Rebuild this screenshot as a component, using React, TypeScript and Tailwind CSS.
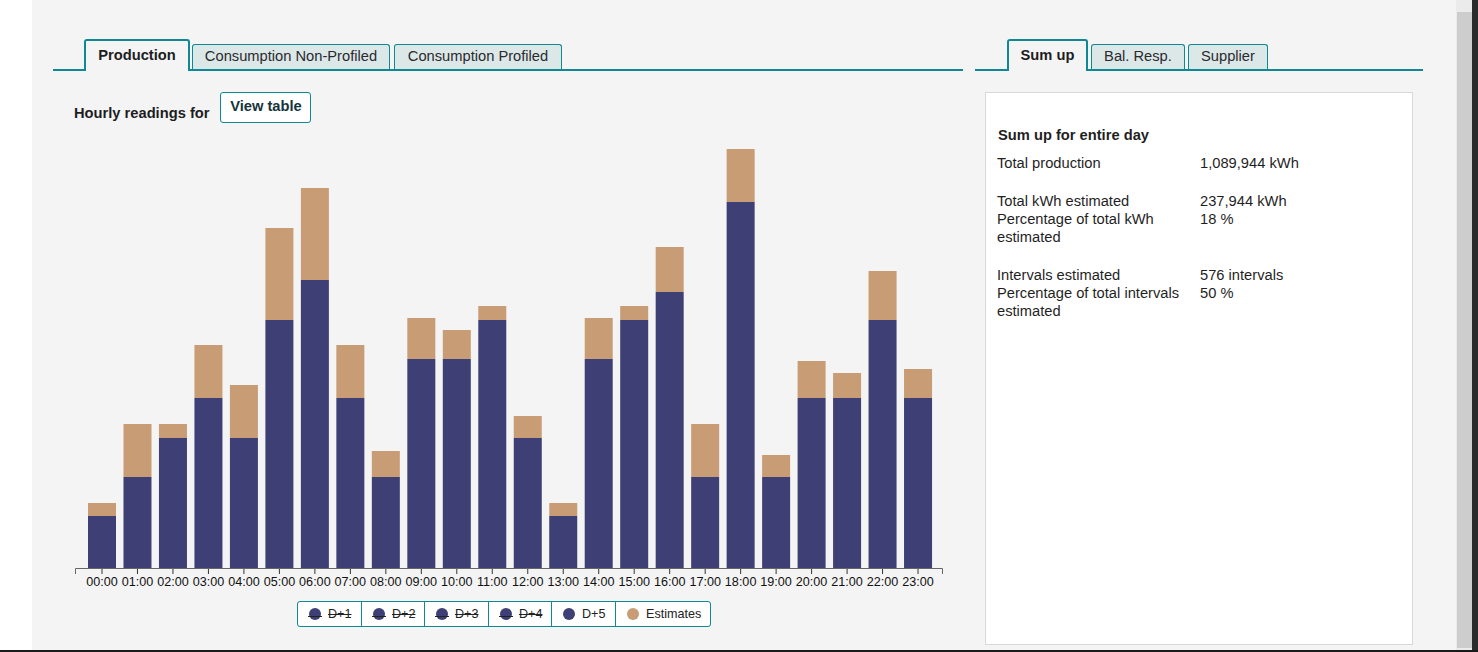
import React from 'react'

// [navyTop, tanTop] in page px, base line at 568
const bars: [number, number][] = [
  [516, 503], [477, 424], [438, 424], [398, 345], [438, 385], [320, 228],
  [280, 188], [398, 345], [477, 451], [359, 318], [359, 330], [320, 306],
  [438, 416], [516, 503], [359, 318], [320, 306], [292, 247], [477, 424],
  [202, 149], [477, 455], [398, 361], [398, 373], [320, 271], [398, 369],
]

type Tab = {label: string; active?: boolean; w: string; ml: string}

function TabBar({tabs, lead}: {tabs: Tab[]; lead: string}) {
  return (
    <div className={`flex items-end border-b-2 border-[#0e8893] h-[32px] ${lead}`}>
      {tabs.map((t) =>
        t.active ? (
          <div
            key={t.label}
            className={`${t.w} ${t.ml} -mb-[2px] h-[32px] pb-[2px] border-2 border-b-0 border-[#0e8893] bg-[#f4f4f4] rounded-t-[3px] flex items-center justify-center font-bold text-[14.7px] text-[#1d1d1f]`}
          >
            {t.label}
          </div>
        ) : (
          <div
            key={t.label}
            className={`${t.w} ${t.ml} h-[25px] pb-[1px] border border-b-0 border-[#0e8893] bg-[#dce8e8] rounded-t-[3px] flex items-center justify-center text-[14.7px] text-[#2a2a2e]`}
          >
            {t.label}
          </div>
        )
      )}
    </div>
  )
}

function Chart() {
  const ox = 53
  const oy = 130
  const base = 568 - oy
  const step = 35.48
  return (
    <svg width={910} height={470} className="mt-[8px] block">
      {bars.map(([nt, tt], i) => {
        const x = 88 + i * step - ox
        return (
          <g key={i}>
            <rect x={x} y={tt - oy - 1} width={28} height={nt - tt} fill="#c89c74" />
            <rect x={x} y={nt - oy - 1} width={28} height={base - (nt - oy) + 1} fill="#3e3f74" />
            <line x1={x + 14} x2={x + 14} y1={base} y2={base + 5} stroke="#333" strokeWidth={1} />
            <text
              x={x + 14}
              y={base + 17}
              textAnchor="middle"
              fontSize={12.6}
              fontFamily="'Liberation Sans', Arial, sans-serif"
              fill="#111"
            >
              {String(i).padStart(2, '0')}:00
            </text>
          </g>
        )
      })}
      <path d={`M22.5 ${base + 5} V${base - 0.5} H889.5 V${base + 5}`} fill="none" stroke="#666" strokeWidth={1} />
    </svg>
  )
}

const legend = [
  {label: 'D+1', off: true, w: 'w-[63px]'},
  {label: 'D+2', off: true, w: 'w-[63px]'},
  {label: 'D+3', off: true, w: 'w-[64px]'},
  {label: 'D+4', off: true, w: 'w-[63px]'},
  {label: 'D+5', off: false, w: 'w-[64px]'},
  {label: 'Estimates', off: false, w: 'w-[95px]', tan: true},
]

function Legend() {
  return (
    <div className="ml-[244px] self-start flex h-[26px] border border-[#0e8893] rounded-[3px] bg-white">
      {legend.map((l, i) => (
        <div
          key={l.label}
          className={`${l.w} flex items-center gap-[7px] pl-[11px] text-[12.6px] text-[#222] ${i > 0 ? 'border-l border-[#0e8893]' : ''}`}
        >
          <span className={`relative w-[12px] h-[12px] rounded-full ${l.tan ? 'bg-[#c89c74]' : 'bg-[#3e3f74]'}`}>
            {l.off && <span className="absolute left-[-1px] right-[-1px] top-[8px] h-[1px] bg-[#222]" />}
          </span>
          <span className={l.off ? 'line-through' : ''}>{l.label}</span>
        </div>
      ))}
    </div>
  )
}

function Row({label, value}: {label: React.ReactNode; value: string}) {
  return (
    <div className="flex">
      <div className="w-[203px]">{label}</div>
      <div>{value}</div>
    </div>
  )
}

export default function App() {
  return (
    <div className="h-[652px] w-[1478px] overflow-hidden flex flex-col bg-white font-['Liberation_Sans',Arial,sans-serif] text-[#222]">
      <div className="flex flex-1 min-h-0">
        <div className="w-[32px] bg-white" />
        <main className="w-[1424px] bg-[#f4f4f4] flex gap-[12px] pl-[21px] pt-[39px]">
          <section className="w-[910px] flex flex-col">
            <TabBar
              lead="pl-[31px]"
              tabs={[
                {label: 'Production', active: true, w: 'w-[106px]', ml: ''},
                {label: 'Consumption Non-Profiled', w: 'w-[198px]', ml: 'ml-[2px]'},
                {label: 'Consumption Profiled', w: 'w-[168px]', ml: 'ml-[4px]'},
              ]}
            />
            <div className="flex items-start mt-[21px] pl-[21px]">
              <span className="mt-[13px] text-[14.7px] leading-[16px] font-bold text-[#1d1d1f]">Hourly readings for</span>
              <button className="ml-[11px] w-[91px] h-[31px] pt-[5px] pb-[8px] border border-[#0e8893] rounded-[3px] bg-white text-[14.7px] leading-[16px] font-bold text-[#17343a]">
                View table
              </button>
            </div>
            <Chart />
            <Legend />
          </section>
          <aside className="w-[448px] flex flex-col">
            <TabBar
              lead="pl-[32px]"
              tabs={[
                {label: 'Sum up', active: true, w: 'w-[81px]', ml: ''},
                {label: 'Bal. Resp.', w: 'w-[94px]', ml: 'ml-[3px]'},
                {label: 'Supplier', w: 'w-[80px]', ml: 'ml-[3px]'},
              ]}
            />
            <div className="mt-[21px] mx-[10px] mb-[5px] flex-1 bg-white border border-[#d8d8d8] pt-[33px] pl-[11px] text-[14.7px] leading-[18px] text-[#1f1f1f]">
              <div className="font-bold ml-[1px] mb-[10px]">Sum up for entire day</div>
              <Row label="Total production" value="1,089,944 kWh" />
              <div className="mt-[20px]">
                <Row label="Total kWh estimated" value="237,944 kWh" />
                <Row label={<>Percentage of total kWh<br />estimated</>} value="18 %" />
              </div>
              <div className="mt-[20px]">
                <Row label="Intervals estimated" value="576 intervals" />
                <Row label={<>Percentage of total intervals<br />estimated</>} value="50 %" />
              </div>
            </div>
          </aside>
        </main>
        <div className="w-[16px] bg-[#ebebeb] pt-[12px] pl-[1px] pb-[2px]">
          <div className="h-full bg-[#cdcdcd]" />
        </div>
        <div className="w-[6px] bg-[#2b2b2b]" />
      </div>
      <div className="h-[2px] bg-[#1a1a1a]" />
    </div>
  )
}
